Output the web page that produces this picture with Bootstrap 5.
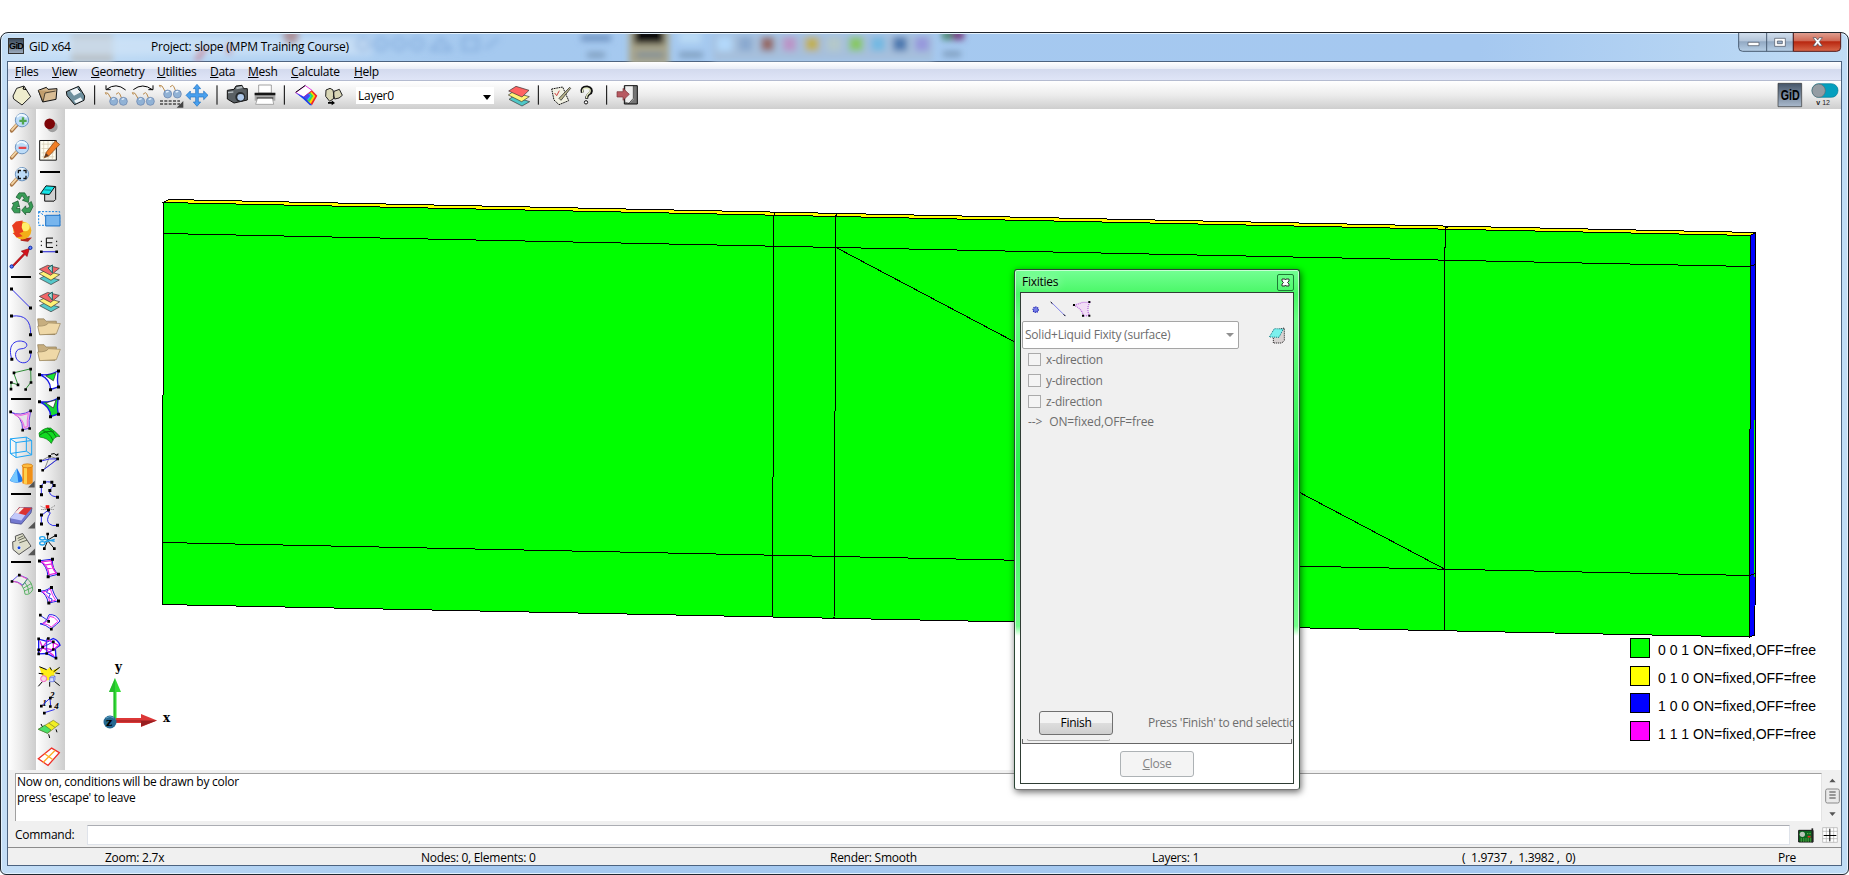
<!DOCTYPE html>
<html lang="en">
<head>
<meta charset="utf-8">
<title>GiD x64 - Project: slope</title>
<link rel="stylesheet" href="https://cdn.jsdelivr.net/npm/bootstrap@5.3.0/dist/css/bootstrap.min.css">
<style>
body{font-family:"Open Sans","Noto Sans",sans-serif;font-size:12px;line-height:16px;letter-spacing:-.27px;color:#000;background:#fff;height:875px;overflow:hidden}
svg{display:block;flex:none}
.k{stroke:#000;fill:none;stroke-width:3}
.bl{stroke:#3030e8;fill:none;stroke-width:3}
.dots{fill:#000}
.win{height:843px;margin-top:32px;border:1px solid #20262e;border-radius:8px 8px 6px 6px;background:linear-gradient(90deg,#c4def6,#a5c9ef 25%,#a5c8f0 80%,#c0dcf5);padding:0 6px 7px;overflow:hidden;box-shadow:inset 0 0 0 1px #e4f2fd}
.titlebar{height:28px;position:relative}
.haze{position:absolute;left:-6px;top:1px}
.ttl{position:relative;display:grid;grid-template-columns:21px 122px 1fr;padding-left:1px;padding-top:5px}
.ttl span{position:relative;top:1px}
.ttl span:last-child{letter-spacing:-.22px}
.gidmark{width:16px;height:16px;background:linear-gradient(#39485a,#9aa9bb);border:1px solid #333;font:bold 9px/14px "Liberation Sans",sans-serif;letter-spacing:-.6px;text-align:center}
.caps{position:absolute;right:0;top:0}
.client{border:1px solid #4c6380;height:805px;background:#f0f0f0;overflow:hidden}
.menus{height:19px;display:grid;grid-template-columns:37px 39px 66px 53px 38px 43px 63px auto;padding:2px 0 0 7px;background:linear-gradient(#fff,#e9edf7 38%,#d3daee 40%,#dfe5f7);border-bottom:1px solid #b4bbd0}
.menus span,.statusline span{white-space:nowrap}
.tools{height:28px;display:grid;grid-template-columns:25px 28px 26px 12px 28px 27px 27px 27px 12px 28px 28px 12px 30px 34px 149px 30px 12px 31px 24px 12px 28px 1fr 33px 33px;padding-left:4px;background:linear-gradient(#fff,#ececec 50%,#cecece)}
.tools > svg{width:100%;height:28px}
.layerbox{height:17px;width:138px;margin-top:6px;background:#fff;line-height:16px;padding:0 3px 0 2px}
.layerbox svg{position:relative;top:2px}
.work{height:661px}
.side1,.side2{background:linear-gradient(90deg,#fff,#ebebeb 45%,#cdcdcd)}
.side1{width:28px}
.side2{width:29px;padding-top:1.5px}
.side1 svg{width:28px;height:27px}
.side2 svg{width:29px;height:26.86px}
.side1 hr,.side2 hr{height:2px;width:20px;background:#000;border:0;opacity:1}
.side1 hr{margin:5px 0 7px 3px}
.side2 hr{margin:7px 0 6px 4px}
.msgs{height:53px;padding:3px 0 0 7px}
.msgtext{width:1807px;height:48px;background:#fff;border-top:1px solid #a0a0a0;border-left:1px solid #a0a0a0;border-right:1px solid #e3e3e3;padding-left:1px;white-space:pre}
.scr{margin-left:3px}
.cmd{height:24px;padding-left:7px}
.cmdfield{width:1703px;height:20px;background:#fff;border:1px solid #dfe3ea;border-top-color:#abadb3}
.cmdlabel{width:72px}
.gridbtn{margin-left:7px}
.statusline{display:grid;grid-template-columns:316px 409px 322px 310px 316px auto;padding:2px 0 0 97px;border-top:1px solid #8c8c8c;height:20px;background:#f0f0f0}
.dlg{position:absolute;left:1014px;top:269px;width:286px;height:521px;border:1px solid #2b4634;border-bottom-color:#777;border-radius:3px;padding:22px 5px 5px;background:linear-gradient(#74ff94,#48f765 24px,#66ff83 50px,#3cf55c 150px,#23f548 200px,#73ff8b 356px,#fff 366px);box-shadow:inset 0 0 0 1px rgba(255,255,255,.6),1px 2px 7px rgba(0,0,0,.6)}
.dlg .cap{position:absolute;left:6px;top:3px;padding:1px;text-shadow:0 0 8px #fff}
.dlgclose{position:absolute;right:5px;top:4px;width:17px;height:17px;border:1px solid #1d7a35;border-radius:2px}
.dlgbody{border:1px solid #2f3d34;height:492px;background:#fff;color:#6d6d6d}
.pane{height:451px;background:#f0f0f0;padding:7px 0 0 1px;overflow:hidden}
.fixsel{width:217px;height:28px;margin-top:1px;border:1px solid #a5a5a5;border-radius:2px;background:#fff;padding:0 4px 0 2px;letter-spacing:-.22px}
.erase{margin-left:29px}
.chk{height:21px;gap:5px;padding-left:6px}
.chk i{width:13px;height:13px;border:1px solid #aaa;background:#f4f4f4}
.onoff{gap:7px;margin-top:-1px}
.onoff span{letter-spacing:-.12px}
.wbtn{width:74px;height:24px;border:1px solid #707070;border-radius:3px;text-align:center;line-height:21px;color:#000;background:linear-gradient(#f3f3f3 48%,#dddddd 52%,#cfcfcf)}
.wbtn.off{border-color:#adb2b5;background:#f4f4f4;color:#838383;height:26px;line-height:24px;margin-top:7px}
.finrow{margin:279px 0 0 17px}
.hint{margin-left:35px;white-space:nowrap}
.stub{height:2px;width:83px;border:1px solid #aaa;border-top:0;border-radius:0 0 3px 3px;margin:4px 0 0 5px}
.tray{height:5px;width:270px;border:1px solid #666;border-top:0;margin-top:-2px}
</style>
</head>
<body>
<main class="win position-relative">
 <header class="titlebar">
  <svg class="haze" width="1845" height="28" viewBox="0 0 1845 28"><defs><filter id="soft" x="-20%" y="-50%" width="140%" height="200%"><feGaussianBlur stdDeviation="3"/></filter></defs>
   <g filter="url(#soft)"><rect x="70" width="42" height="28" fill="#b8bfc5"/><rect x="10" y="3" width="360" height="18" fill="#d3e5f7" opacity=".65"/><circle cx="290" cy="2" r="8" fill="#ab929b"/><path d="M195 26l10-13M228 20v-10" stroke="#c76f83" stroke-width="4"/>
   <g fill="none" stroke="#7da6d8" stroke-width="2"><circle cx="362" cy="10" r="6"/><circle cx="380" cy="10" r="6"/><circle cx="398" cy="10" r="6"/><circle cx="416" cy="10" r="6"/><path d="M430 16l10-12 10 12zM462 4h15v12h-15zM484 15l14-11"/></g>
   <path d="M580 4h30" stroke="#6d91bf" stroke-width="6"/><rect x="628" y="-5" width="40" height="36" fill="#a9a58b"/><rect x="633" y="-6" width="30" height="16" fill="#080b0e"/><path d="M635 21h28M678 21h24M586 21h18M942 20h18" stroke="#67829f" stroke-width="5" opacity=".7"/><rect x="678" y="-3" width="22" height="12" fill="#b9daf5"/><rect x="712" y="0" width="220" height="27" fill="#a6bfdc"/>
   <g><rect x="716" y="3" width="15" height="14" fill="#b2d8fa"/><rect x="738" y="3" width="13" height="14" fill="#8aa9cf"/><rect x="760" y="3" width="13" height="14" fill="#956b66"/><rect x="782" y="3" width="13" height="14" fill="#ba94c7"/><rect x="804" y="3" width="14" height="14" fill="#c0b158"/><rect x="826" y="3" width="14" height="14" fill="#b4c8ca"/><rect x="848" y="3" width="14" height="14" fill="#88c765"/><rect x="870" y="3" width="14" height="14" fill="#75b9e2"/><rect x="892" y="3" width="14" height="14" fill="#4e79b0"/><rect x="914" y="3" width="14" height="14" fill="#9799dc"/><rect x="941" y="-4" width="10" height="10" fill="#4f8c77"/><rect x="951" y="-4" width="12" height="10" fill="#743f82"/></g></g></svg>
  <div class="ttl"><div class="gidmark">GiD</div><span>GiD x64</span><span>Project: slope (MPM Training Course)</span></div>
  <svg class="caps" width="104" height="20" viewBox="0 0 312 60"><defs><linearGradient id="cb" x2="0" y2="1"><stop stop-color="#d7e4f1"/><stop offset=".48" stop-color="#b4c5d9"/><stop offset=".52" stop-color="#92a9c3"/><stop offset="1" stop-color="#b7cfe6"/></linearGradient><linearGradient id="cr" x2="0" y2="1"><stop stop-color="#e3a99c"/><stop offset=".48" stop-color="#cf6955"/><stop offset=".52" stop-color="#b8260f"/><stop offset="1" stop-color="#d8684a"/></linearGradient></defs><path d="M2-5v48q0 12 12 12h152V-5z" fill="url(#cb)" stroke="#4a5d73" stroke-width="3"/><path d="M86 0v55" stroke="#4a5d73" stroke-width="3"/><path d="M166-5v60h130q12 0 12-12V-5z" fill="url(#cr)" stroke="#541a1a" stroke-width="3"/><g stroke="#444b5b" stroke-width="2" fill="#fff"><path d="M30 28h33v10H30zM110 16h32v24h-32z"/><path fill="#9bb1cb" d="M118 24h15v8h-15z"/><path d="M225 14h9l5 7 5-7h9l-9 12 9 13h-9l-5-7-5 7h-9l9-13z"/></g></svg>
 </header>
 <section class="client">
  <nav class="menus"><span><u>F</u>iles</span><span><u>V</u>iew</span><span><u>G</u>eometry</span><span><u>U</u>tilities</span><span><u>D</u>ata</span><span><u>M</u>esh</span><span><u>C</u>alculate</span><span><u>H</u>elp</span></nav>
  <div class="tools">
   <svg viewBox="36 168 75 84"><path d="M50 190l22-7 20 32-26 25-25-18-2-9z" fill="#efedce" stroke="#222" stroke-width="3"/><path d="M72 184l-3 8 10 2" class="k" stroke-width="2"/></svg>
   <svg viewBox="111 168 84 84"><path d="M115 196l24-9 5 6 27-2-3 32-40 8z" fill="#d9bd95" stroke="#111" stroke-width="3"/><path d="M115 196l14 35 6-27 32-6" fill="#c29e6d" stroke="#111" stroke-width="2"/></svg>
   <svg viewBox="195 168 78 84"><path d="M199 200l37-16 18 29-2 13-28 13-23-27z" fill="#6e909e" stroke="#111" stroke-width="3"/><path d="M210 197l22-9 10 14-20 10zM222 227l20-10 6 9-20 9z" fill="#eff5f8"/><path d="M234 191l7 8" class="k"/></svg>
   <svg viewBox="273 168 36 84"><path d="M284 181v58" class="k"/></svg>
   <svg viewBox="309 168 84 84"><g id="gl"><path d="M319 209l-3-6 8 2 10 17m14-14l7-5 4 3 6 14" fill="none" stroke="#b98a4c" stroke-width="3"/><circle cx="341" cy="229" r="12" fill="#91b2d5" stroke="#637fab" stroke-width="2"/><circle cx="370" cy="229" r="12" fill="#91b2d5" stroke="#637fab" stroke-width="2"/><path d="M336 223l8-2M365 223l8-2" stroke="#e8f3ff" stroke-width="4"/></g><path d="M320 193q28-22 57 2M318 181v13h14" class="k"/></svg>
   <svg viewBox="393 168 81 84"><use href="#gl" x="81"/><path d="M400 194q28-22 57 0M459 181v13h-14" class="k"/></svg>
   <svg viewBox="474 168 81 84"><use href="#gl" x="162" y="-22"/><path d="M480 228h60M480 237h60" stroke="#000" stroke-width="3" stroke-dasharray="9 4"/><path d="M550 228v20h-20z" fill="#444"/></svg>
   <svg viewBox="555 168 81 84"><path d="M591 178l11 13h-7v15h16v-8l13 13-13 13v-8h-16v15h7l-11 13-11-13h7v-15h-16v8l-13-13 13-13v8h16v-15h-7z" fill="#48a0ee" stroke="#1d6fc1" stroke-width="2"/></svg>
   <svg viewBox="636 168 36 84"><path d="M651 181v58" class="k"/></svg>
   <svg viewBox="672 168 84 84"><path d="M682 196l20-3 6-10 18-2 5 10h11v34l-40 9-20-12z" fill="#5a6064" stroke="#111" stroke-width="3"/><path d="M709 190l18-4" stroke="#b6bdc0" stroke-width="6"/><path d="M684 203l16-2" stroke="#b6bdc0" stroke-width="4"/><circle cx="721" cy="216" r="15" fill="#272b2e"/><circle cx="722" cy="217" r="10" fill="#afc9ea"/></svg>
   <svg viewBox="756 168 84 84"><path d="M776 180h38v24h-38z" fill="#fff" stroke="#777" stroke-width="2"/><path d="M764 204h62v23h-62z" fill="#aaa"/><path d="M764 207h62" stroke="#161616" stroke-width="7"/><path d="M773 218h44l4 20h-54z" fill="#fff" stroke="#888" stroke-width="2"/><path d="M770 219h50" stroke="#222" stroke-width="3"/></svg>
   <svg viewBox="840 168 36 84"><path d="M853 181v58" class="k"/></svg>
   <svg viewBox="876 168 90 84"><path d="M887 203l29-21 20 14-25 20z" fill="#fff" stroke="#e43be4" stroke-width="3"/><path d="M887 202l29-21" class="k"/><path d="M936 196l16 16-16 29-25-25z" fill="#ef2328"/><path d="M933 199l13 14-14 24-8-8z" fill="#ffd400"/><path d="M930 202l10 11-12 18-6-6z" fill="#2fe05a"/><path d="M926 205l8 8-10 13-6-6z" fill="#19c9f5"/><path d="M911 215l13-9 7 6-11 13z" fill="#4747f5"/><path d="M887 203l25 13 24 25-6 0-20-19z" fill="#1442f0"/></svg>
   <svg viewBox="966 168 102 84"><path d="M978 195l12-5 9 5 4 24-14 10-12-15zM1002 199l16-6 9 18-10 8-13 3-4-6z" fill="#d8d6b5" stroke="#222" stroke-width="3"/><path d="M984 231h11v-5l10 8-10 7v-5h-11z" fill="#000"/></svg>
   <div><div class="layerbox d-flex justify-content-between align-items-center">Layer0<svg width="8" height="5" viewBox="0 0 8 5"><path d="M0 0h8L4 5z"/></svg></div></div>
   <svg viewBox="15 168 90 84"><g stroke="#333" stroke-width="2"><path d="M27 223l13-9 49 16-23 13z" fill="#4fc7c7"/><path d="M25 210l13-9 50 14-23 15z" fill="#fff276"/><path d="M26 198l22-14 39 12-21 20z" fill="#ff6262"/></g></svg>
   <svg viewBox="105 168 36 84"><path d="M115 181v58" class="k"/></svg>
   <svg viewBox="141 168 93 84"><path d="M155 192l33-6 18 41-29 12-15-14z" fill="#f2f2e4" stroke="#111" stroke-width="3" stroke-dasharray="5 2"/><path d="M164 204l6 8 8-15" fill="none" stroke="#cf4040" stroke-width="3"/><path d="M177 220l32-33 3 3-29 36z" fill="#b9b68d" stroke="#111" stroke-width="2"/></svg>
   <svg viewBox="234 168 72 84"><path d="M247 203q-5-17 14-17 18 3 11 18-12 6-12 17" fill="none" stroke="#111" stroke-width="9"/><path d="M248 202q-3-13 13-13 14 3 8 14-10 6-9 16" fill="none" stroke="#e6edc6" stroke-width="4"/><circle cx="258" cy="232" r="5" fill="#fff" stroke="#111" stroke-width="3"/></svg>
   <svg viewBox="306 168 36 84"><path d="M320 181v58" class="k"/></svg>
   <svg viewBox="342 168 84 84"><path d="M373 182h39v55h-39z" fill="#757575" stroke="#111" stroke-width="3"/><path d="M376 184h25v38l-12 12-13-4z" fill="#eee"/><path d="M400 182v38l-15 17" stroke="#111" stroke-width="2" fill="none"/><path d="M351 200h18v-10l19 18-19 18v-10h-18z" fill="#b75961" stroke="#793036" stroke-width="2"/></svg>
   <span></span>
   <svg viewBox="825 168 99 84"><defs><linearGradient id="gg" x2="0" y2="1"><stop stop-color="#46566a"/><stop offset="1" stop-color="#a9b9cc"/></linearGradient></defs><path d="M834 175h71v70h-71z" fill="url(#gg)" stroke="#333" stroke-width="2"/><text x="842" y="226" font-family="Liberation Sans,sans-serif" font-weight="bold" font-size="42" textLength="57" lengthAdjust="spacingAndGlyphs" letter-spacing="0">GiD</text></svg>
   <svg viewBox="924 168 99 84"><rect x="936" y="176" width="78" height="41" rx="20" fill="#049fbe" stroke="#087e95" stroke-width="2"/><circle cx="956" cy="197" r="20" fill="#949ca3" stroke="#626a70" stroke-width="2"/><text x="949" y="241" font-family="Liberation Sans,sans-serif" font-size="21" letter-spacing="0" fill="#222"><tspan font-weight="bold">v</tspan> 12</text></svg>
  </div>
  <div class="work d-flex">
   <div class="side1">
    <svg viewBox="24 10.5 84 81"><g id="mag"><path d="M51 58L35 76" stroke="#a97646" stroke-width="11" stroke-linecap="round"/><path d="M51 56L36 73" stroke="#f2d3a2" stroke-width="6" stroke-linecap="round"/><circle cx="66" cy="44" r="20" fill="#bddcf8" stroke="#6d94bf" stroke-width="3"/><path d="M51 35q12-15 29 0" stroke="#eff9ff" stroke-width="6" fill="none"/></g><path d="M58 46h22M69 35v22" stroke="#50a650" stroke-width="7"/></svg>
    <svg viewBox="24 91.5 84 81"><use href="#mag" y="81"/><path d="M56 127h23" stroke="#e34449" stroke-width="7"/></svg>
    <svg viewBox="24 172.5 84 81"><use href="#mag" y="162"/><path d="M55 203v-8h8m7 0h8v8m0 8v8h-8m-7 0h-8v-8" stroke="#111" stroke-width="4" fill="none"/></svg>
    <svg viewBox="24 253.5 84 81"><g fill="#399c57" stroke="#145129" stroke-width="2"><path d="M48 275l9-13h17l8 13 6-3-3 19-18-7 6-4-7-10-7 12z"/><path d="M85 294l9-6 5 15-9 18H77v7l-12-14 12-13v7h8l4-6z"/><path d="M60 322H43l-8-12 6-13-5-3 18-8 5 19-6-3-3 7h10z"/></g></svg>
    <svg viewBox="24 334.500 84 81"><path d="M62 398l34-2-12 13-22-3z" fill="#b4261c"/><circle cx="67" cy="375" r="27" fill="#f3ae18"/><circle cx="76" cy="364" r="13" fill="#fff06b"/><path d="M36 360l12-12 20-3-3 20 5 14-12 4 10 9-18 4-7-9-5-4 6-2z" fill="#e83c20"/></svg>
    <svg viewBox="24 415.5 84 81"><path d="M36 481l36-38-8-6 24-8-7 24-6-6-35 37z" fill="#d5131b" stroke="#90050a" stroke-width="2"/><circle cx="35" cy="483" r="5" fill="#5f83ff" stroke="#0924a9" stroke-width="3"/><circle cx="91" cy="427" r="5" fill="#5f83ff" stroke="#0924a9" stroke-width="3"/></svg>
    <hr>
    <svg viewBox="24 538.5 84 81"><path d="M35 551l56 56" class="bl"/><path class="dots" d="M30 546h9v9h-9zM87 603h9v9h-9z"/></svg>
    <svg viewBox="24 619.5 84 81"><path d="M35 632q59-8 57 55" class="bl"/><path class="dots" d="M30 627h9v9h-9zM87 683h9v9h-9z"/></svg>
    <svg viewBox="24 -4.5 84 81"><path d="M36 58C22 15 42-1 65 2S84 25 63 25s-22 32-2 40S95 55 92 36" class="bl"/><path class="dots" d="M31 52h9v9h-9zM87 30h9v9h-9z"/></svg>
    <svg viewBox="24 76.5 84 81"><path d="M33 146V126l21 7-13-36 51-12 1 40-17 22" fill="none" stroke="#2f8c36" stroke-width="3"/><path class="dots" d="M29 142h8v8h-8zM30 122h8v8h-8zM50 129h8v8h-8zM38 93h8v8h-8zM88 82h8v8h-8zM89 122h8v8h-8zM73 143h8v8h-8z"/></svg>
    <hr>
    <svg viewBox="24 199.5 84 81"><path d="M33 215q27 13 59-4-7 32-4 52l-20 5q0-40-35-53z" fill="#f4b9ee" stroke="#6e45e2" stroke-width="3"/><path d="M43 222q20 7 42-3-5 22-3 39l-9 3q-2-26-30-39z" fill="#e4e3e9" stroke="#f067df" stroke-width="3"/><path class="dots" d="M28 210h8v8h-8zM88 207h8v8h-8zM85 260h8v8h-8zM64 265h8v8h-8z"/></svg>
    <svg viewBox="24 280.5 84 81"><path d="M31 295l48-5 16 10v43l-47 8-17-12zM31 295l17 11 47-6M48 306v45M79 290v42l16 11M79 332l-48 7" fill="none" stroke="#1ba4f5" stroke-width="3"/></svg>
    <svg viewBox="24 361.5 84 81"><path d="M51 383l20 38q-20 12-42 0z" fill="#227bea"/><path d="M50 384l5 42q-16 1-25-6z" fill="#74c7ff"/><path d="M67 376h31v52q-16 8-31 0z" fill="#f19018"/><path d="M72 376h9v54h-9z" fill="#ffd04c"/><ellipse cx="82" cy="376" rx="16" ry="6" fill="#ffba3d" stroke="#c76f0a" stroke-width="2"/><path d="M104 421v20H84z" fill="#555"/></svg>
    <hr>
    <svg viewBox="24 484.5 84 81"><path d="M31 534l27-33 38 1-3 15-29 34-32-4z" fill="#7379d0" stroke="#35377c" stroke-width="2"/><path d="M31 533l17-21 29 10-13 18z" fill="#c3c9fa"/><path d="M57 501l39 1-19 22-31-8z" fill="#dc3332"/><path d="M60 501l12 1-17 17-10-3z" fill="#f8ece9"/><path d="M105 544v20H84z" fill="#555"/></svg>
    <svg viewBox="24 565.5 84 81"><path d="M46 587l22-8 25 38-36 25-18-15-1-23 9-3z" fill="#ddddca" stroke="#555" stroke-width="3"/><path d="M53 594l17-8M55 600l20-9M58 607l23-8" stroke="#66695a" stroke-width="3"/><circle cx="57" cy="622" r="6" fill="#1344de" stroke="#eee" stroke-width="3"/><path d="M105 624v20H84z" fill="#555"/></svg>
    <hr>
    <svg viewBox="24 -1.5 84 81"><path d="M35 32l22-19 26 11-14 20q-14-12-34-12z" fill="#eee" stroke="#6658ed" stroke-width="3"/><path d="M36 33q19-1 31 15M58 14l25 12" stroke="#e84bbd" stroke-width="3" fill="none"/><path d="M66 46q9 13 9 25 14 4 23-13-1-22-16-33zM74 35q12 12 13 34M70 53l24-14M73 62l25-12" fill="none" stroke="#44aa51" stroke-width="2.500"/><path class="dots" d="M32 29h8v8h-8zM54 10h8v8h-8z"/></svg>
   </div>
   <div class="side2">
    <svg viewBox="108 16.5 87 80.6"><circle cx="157" cy="64" r="16" fill="#9f9f9f"/><circle cx="149" cy="55" r="16" fill="#7d0508"/></svg>
    <svg viewBox="108 97.5 87 80.6"><path d="M119 108h50v59h-50z" fill="#fffdf0" stroke="#151515" stroke-width="3"/><path d="M125 119h38M125 132h38M125 145h38M125 157h38M131 110v54M144 110v54M157 110v54" stroke="#d2c8ae" stroke-width="2"/><path d="M166 109l13 11-32 34-14 6 6-17z" fill="#f07e25" stroke="#783a0a" stroke-width="2"/><path d="M133 159l5-13 8 7z" fill="#5a3a24"/></svg>
    <hr>
    <svg viewBox="108 223.5 87 80.6"><path d="M134 254l33-8v39l-5 5h-28z" fill="#d0d0d0" stroke="#111" stroke-width="3"/><path d="M121 268l17-24 27 2-17 24z" fill="#16e5e8" stroke="#111" stroke-width="3"/><path d="M133 256l20 1" stroke="#087f88" stroke-width="3"/></svg>
    <svg viewBox="108 304.1 87 80.6"><path d="M116 321h63v42M116 321v41M116 321l20 14M116 362h18" fill="none" stroke="#1382e2" stroke-width="3" stroke-dasharray="6 4"/><path d="M137 332h43v32h-43z" fill="#77b5ed" stroke="#1d72c7" stroke-width="3"/></svg>
    <svg viewBox="108 384.7 87 80.6"><path d="M159 400h-20v28h20M139 414h18" class="k"/><path d="M125 441h46" stroke="#1616d5" stroke-width="3"/><path d="M124 408v4m0 8v4m46-16v4m0 8v4" class="k"/><path class="dots" d="M120 437h8v8h-8zM166 437h8v8h-8z"/></svg>
    <svg viewBox="108 465.2 87 80.6"><g id="ly" stroke="#333" stroke-width="2"><path d="M119 521l15-8 44 12-25 14z" fill="#56c8ca"/><path d="M117 506l19-9 43 12-26 17z" fill="#fff176"/><path d="M118 493l25-12 35 9-26 21z" fill="#f06668"/><path d="M144 489l13-9v24z" fill="#a5ded9" stroke="#145f61" stroke-width="3"/></g></svg>
    <svg viewBox="108 545.8 87 80.6"><use href="#ly" y="81"/></svg>
    <svg viewBox="108 626.4 87 80.6"><g id="fo"><path d="M113 641h19l6 7h31v10l-4 30h-46z" fill="#c7ae7f" stroke="#8a7550" stroke-width="2"/><path d="M113 663q28 0 32-10l36 2-12 31-50 3z" fill="#efd8a7" stroke="#96825b" stroke-width="2"/></g></svg>
    <svg viewBox="108 2 87 80.6"><use href="#fo" y="-625"/></svg>
    <svg viewBox="108 82.6 87 80.6"><path d="M118 105q30 5 57-11-5 28 0 48l-23 8q0-30-34-45z" fill="#fff" stroke="#1717e6" stroke-width="4"/><path d="M137 109l31-9-8 24z" fill="#17e637" stroke="#222" stroke-width="2"/><path class="dots" d="M114 101h9v9h-9zM171 90h9v9h-9zM171 138h9v9h-9zM147 146h9v9h-9z"/></svg>
    <svg viewBox="108 163.1 87 80.6"><path d="M118 186q30 5 57-11-5 28 0 48l-23 8q0-30-34-45z" fill="#15d834" stroke="#1717e6" stroke-width="4"/><path d="M137 190l31-9-8 24z" fill="#fff" stroke="#222" stroke-width="2"/><path class="dots" d="M114 182h9v9h-9zM171 171h9v9h-9zM171 219h9v9h-9zM147 227h9v9h-9z"/></svg>
    <svg viewBox="108 243.7 87 80.6"><path d="M117 280q16-18 35-15 14 10 28 25-17-3-26 21-12-17-35-19z" fill="#12da22" stroke="#066e0e" stroke-width="2"/><path d="M127 272q20 4 32 30M142 265q18 7 26 26M118 287q20-17 44-10" fill="none" stroke="#087311" stroke-width="3"/></svg>
    <svg viewBox="108 324.3 87 80.6"><path d="M122 363l27-14 24 8-45 34M149 349l-15 38" fill="none" stroke="#888" stroke-width="3"/><path d="M121 364q28-10 53-7l-45 34" class="bl"/><path d="M153 343q10-6 18 4" class="k"/><path class="dots" d="M118 359h8v8h-8zM145 345h8v8h-8zM169 353h8v8h-8zM166 347h9v-8zM124 387h8v8h-8z"/></svg>
    <svg viewBox="108 404.9 87 80.6"><path d="M124 464V439q5-17 28-13 15 9-1 21-10 20 20 24" class="bl"/><path class="dots" d="M120 460h9v9h-9zM119 435h9v9h-9zM129 422h9v9h-9zM151 422h9v9h-9zM158 432h9v9h-9zM145 447h9v9h-9zM168 467h9v9h-9z"/></svg>
    <svg viewBox="108 485.5 87 80.6"><path d="M124 551v-25l22-17q-4 9 5 9-15 22-3 33 9 8 24 5" class="bl"/><path d="M122 498l22 10M165 496l-20 13M124 508h38" stroke="#777" stroke-width="3" stroke-dasharray="3 3"/><path d="M137 495h11v10h-11z" fill="#f01414"/><path class="dots" d="M120 547h9v9h-9zM120 520h9v9h-9zM141 505h9v9h-9zM168 551h9v9h-9z"/></svg>
    <svg viewBox="108 566 87 80.6"><path d="M140 604l27-16M143 602V586M143 604l20 24M143 604l-10 24" stroke="#111" stroke-width="3" fill="none"/><g stroke="#22a3ed" stroke-width="4" fill="none"><path d="M134 600l30 6M134 608l30-8"/><ellipse cx="127" cy="597" rx="8" ry="5"/><ellipse cx="127" cy="612" rx="8" ry="5"/></g><path class="dots" d="M139 580h8v8h-8zM163 585h8v8h-8zM129 624h8v8h-8zM159 624h8v8h-8z"/></svg>
    <svg viewBox="108 646.6 87 80.6"><path d="M118 664l39-5q-1 31 18 45l-31 8q-2-33-26-48z" fill="#fff" stroke="#1818df" stroke-width="3"/><path d="M124 667l30-4q1 25 15 38l-22 5q-3-26-23-39zM133 677l24-4M140 689l22-5" fill="none" stroke="#e523df" stroke-width="4"/><path class="dots" d="M114 660h9v9h-9zM153 655h9v9h-9zM171 700h9v9h-9zM140 707h9v9h-9z"/></svg>
    <svg viewBox="108 37.2 87 80.6"><path d="M119 63q14 5 35-11 9 27 21 42-13 2-30 7-4-27-26-38z" fill="#fff" stroke="#1c1ce1" stroke-width="3"/><path d="M127 67q15 0 24-9 6 21 16 34l-18 4q-3-20-22-29z" fill="none" stroke="#f02be9" stroke-width="3"/><path d="M143 60l-3 9 11 4-5 11 10 4-1 8" class="bl"/><path class="dots" d="M114 58h9v9h-9zM150 49h9v9h-9zM171 90h9v9h-9zM142 96h9v9h-9z"/></svg>
    <svg viewBox="108 117.8 87 80.6"><path d="M120 162q15 4 27-27 21-3 33 19-8 8-27 24-15-13-33-16z" fill="#fff" stroke="#1d1de1" stroke-width="3"/><path d="M128 161q16-3 21-21 14-1 25 15l-20 17q-9-9-26-11z" fill="none" stroke="#f02be9" stroke-width="3"/><path d="M121 137l25 17" class="bl"/><path class="dots" d="M117 132h8v8h-8zM142 151h8v8h-8zM150 174h8v8h-8z"/></svg>
    <svg viewBox="108 198.4 87 80.6"><path d="M116 208l27 7 17-9q14 4 20 20l-14 10 2 29-28-14-24 1z" fill="#fff" stroke="#1717ef" stroke-width="4"/><path d="M120 246l8-14 17-22 15 8 15 8-15 14-32-6-8-20M128 232l34 26M160 218v22l-20 10" fill="none" stroke="#e323e0" stroke-width="4"/><path d="M128 232l32-16M128 232l-12 8M160 240l-20 10V206" class="bl"/><path class="dots" d="M112 203h8v8h-8zM141 202h8v8h-8zM156 212h8v8h-8zM124 228h8v8h-8zM112 236h8v8h-8zM112 248h8v8h-8zM156 235h8v8h-8zM136 247h8v8h-8zM164 261h8v8h-8z"/></svg>
    <svg viewBox="108 279 87 80.6"><path d="M118 290l22 10 10-8 5 9 24-8-17 18 3 10-16 9-16 2-7-16z" fill="#ffee15"/><path d="M118 290l22 9M150 292l5 9M179 292l-18 13M180 311l-14-2M130 312l-14-2M128 334l-13 15M149 336v14M163 334l16 13" class="k"/><circle cx="131" cy="326" r="9" fill="#f4d2e5" stroke="#ef61c1" stroke-width="3"/><path d="M149 323h12v12h-12zM149 323l5-5h11v12l-4 5m0-12l4-5" fill="#d6dcff" stroke="#5367dc" stroke-width="2"/></svg>
    <svg viewBox="108 359.5 87 80.6"><g font-family="Liberation Serif,serif" font-style="italic" font-weight="bold" font-size="27" letter-spacing="0"><text x="127" y="409">1</text><text x="150" y="385">2</text><text x="163" y="417">4</text></g><path d="M124 408l26-24 2 24M132 428l32-10" class="bl"/><path class="dots" d="M120 404h8v8h-8zM147 380h8v8h-8zM147 405h8v8h-8zM129 425h8v8h-8z"/></svg>
    <svg viewBox="108 440.1 87 80.6"><path d="M115 480l45-27 18 12-35 27z" fill="#f2ee23" stroke="#77772c" stroke-width="2"/><path d="M115 480l19-12 19 14-11 10z" fill="#4ce067" stroke="#3d7a3a" stroke-width="2"/><path d="M146 461l20 14" stroke="#77772c" stroke-width="2"/><path d="M123 464l4 8M168 480l3 9M146 495l3 11" class="k"/></svg>
    <svg viewBox="108 520.7 87 80.6"><path d="M115 568l40-32 23 14-34 38z" fill="#fff" stroke="#ef2f28" stroke-width="4"/><path d="M129 579l36-36M134 553l24 17" stroke="#ffad27" stroke-width="4"/></svg>
   </div>
   <svg width="1776" height="661" viewBox="65 109 1776 661" style="background:#fff">
    <g shape-rendering="crispEdges" fill="#0f0" stroke="#000">
     <path d="M163.5 202.5L169 199.5 1755.5 232.5 1750.5 235.5z" fill="#ff0"/>
     <path d="M163.5 202.5L1750.5 235.5 1749.5 637 162.5 604.5z"/>
     <path d="M1750.5 235.5l5-3V577l-1 58-5 2z" fill="#00f"/>
     <path d="M1754.5 420v157" stroke="#0f0"/><path d="M1755.5 232v345" />
     <path d="M163.5 233.5L1750 266.5l5.500-2M162.500 542.500L1749.500 575.500l6-2M775 212.500l-1 3-1.500 401M837 213.500l-1.500 3-1 400-1 2M1448 227l-2.500 1-1 40v362M836 247.500L1444.500 569" fill="none"/>
    </g>
    <path d="M113.500 719V692h-4.500l6-14 6 14h-4.500v27z" fill="#31dc33"/><path d="M109 692l6-14 0 14v27h-1.500V692z" fill="#1ca427" opacity=".55"/><path d="M116 718h25v-4l16 6.500-16 6.500v-4h-25z" fill="#dc3737"/><path d="M116 721.500h25v5l16-6h-41z" fill="#981f21"/>
    <circle cx="110" cy="722" r="6.500" fill="#266890"/><path d="M106 718q4-3 8 0" stroke="#5ca0c3" fill="none"/>
    <g font-family="DejaVu Serif,serif" font-weight="bold" font-size="12" letter-spacing="0"><text x="115" y="671">y</text><text x="163" y="722">x</text><text x="106" y="726" font-size="11">z</text></g>
    <g stroke="#000" shape-rendering="crispEdges"><path d="M1630.500 638.500h19v19h-19z" fill="#0f0"/><path d="M1630.500 666.500h19v19h-19z" fill="#ff0"/><path d="M1630.500 693.500h19v19h-19z" fill="#00f"/><path d="M1630.500 721.500h19v19h-19z" fill="#f0f"/></g>
    <g font-family="Liberation Sans,Arial,sans-serif" font-size="14" letter-spacing="0"><text x="1658" y="655" textLength="158">0 0 1 ON=fixed,OFF=free</text><text x="1658" y="683" textLength="158">0 1 0 ON=fixed,OFF=free</text><text x="1658" y="711" textLength="158">1 0 0 ON=fixed,OFF=free</text><text x="1658" y="739" textLength="158">1 1 1 ON=fixed,OFF=free</text></g>
   </svg>
  </div>
  <div class="msgs d-flex"><div class="msgtext">Now on, conditions will be drawn by color
press 'escape' to leave</div><svg class="scr" width="15" height="48" viewBox="0 0 45 144"><path d="M13 28h19L22 17zM13 118h19L22 129z" fill="#555"/><rect x="2" y="48" width="41" height="42" rx="5" fill="#e9e9e9" stroke="#898989" stroke-width="3"/><path d="M13 57h19M13 66h19M13 75h19" stroke="#444" stroke-width="3"/></svg></div>
  <div class="cmd d-flex align-items-center"><span class="cmdlabel">Command:</span><div class="cmdfield"></div>
   <svg class="ms-2" width="17" height="17" viewBox="0 0 51 51"><path d="M2 10h43v35H2z" fill="#0b651d" stroke="#111" stroke-width="3"/><path d="M43 4v42" stroke="#222" stroke-width="5"/><circle cx="13" cy="22" r="8" fill="#b9c5b8"/><path d="M27 20h12M8 36h33M8 42h33" stroke="#68bc4b" stroke-width="3" stroke-dasharray="4 3"/><path d="M29 29h9" stroke="#db3020" stroke-width="5"/></svg>
   <svg class="gridbtn" width="16" height="16" viewBox="0 0 48 48"><path d="M2 2h44v44H2zM13 2v44M35 2v44M2 13h44M2 35h44" fill="#fff" stroke="#aaa" stroke-width="2"/><path d="M23.500 5v38M5 25.500h38" class="k"/></svg></div>
  <footer class="statusline"><span>Zoom: 2.7x</span><span>Nodes: 0, Elements: 0</span><span>Render: Smooth</span><span>Layers: 1</span><span>(&nbsp; 1.9737 ,&nbsp; 1.3982 ,&nbsp; 0)</span><span>Pre</span></footer>
 </section>
</main>
<aside class="dlg">
 <div class="cap">Fixities</div>
 <div class="dlgclose"><svg width="15" height="15" viewBox="0 0 15 15"><path d="M4 4h3l.5 1 .5-1h3v2l-1.500 1.500L11 9v2H8l-.5-1-.5 1H4V9l1.500-1.500L4 6z" fill="#fff" stroke="#333"/></svg></div>
 <div class="dlgbody">
  <div class="pane">
   <svg width="78" height="20" viewBox="52 118 234 60"><circle cx="93" cy="147" r="8" fill="#747fe4"/><circle cx="93" cy="147" r="8" fill="none" stroke="#1515af" stroke-width="4" stroke-dasharray="3 3"/><path d="M139 124l43 42" stroke="#8181e8" stroke-width="3"/><path d="M138 124l5 5m34 32l5 5" class="k"/><path d="M208 134l26-9h21q-10 20-1 39l-18 2q-3-21-28-32z" fill="#f1ddf5" stroke="#bd6be2" stroke-width="4" stroke-dasharray="3 3"/><path class="dots" d="M205 130h6v6h-6zM251 121h6v6h-6zM251 162h6v6h-6zM232 162h6v6h-6z"/></svg>
   <div class="d-flex align-items-center"><div class="fixsel d-flex justify-content-between align-items-center"><span>Solid+Liquid Fixity (surface)</span><svg width="8" height="4" viewBox="0 0 8 4"><path d="M0 0h8L4 4z" fill="#909090"/></svg></div>
   <svg class="erase" width="18" height="18" viewBox="790 198 54 54"><path d="M806 212l33-8v38l-8 7h-25z" fill="#d7d2d2" stroke="#111" stroke-width="3" stroke-dasharray="3 3"/><path d="M794 231l15-25 27 1-13 25z" fill="#7bf0ed" stroke="#087a80" stroke-width="3" stroke-dasharray="3 3"/></svg></div>
   <div class="chk d-flex align-items-center"><i></i><span>x-direction</span></div><div class="chk d-flex align-items-center"><i></i><span>y-direction</span></div><div class="chk d-flex align-items-center"><i></i><span>z-direction</span></div>
   <div class="chk onoff d-flex align-items-center"><span>--&gt;</span><span>ON=fixed,OFF=free</span></div>
   <div class="finrow d-flex align-items-center"><div class="wbtn flex-shrink-0">Finish</div><span class="hint">Press 'Finish' to end selection</span></div>
   <div class="stub"></div><div class="tray"></div>
  </div>
  <div class="wbtn off mx-auto"><u>C</u>lose</div>
 </div>
</aside>
<script src="https://cdn.jsdelivr.net/npm/bootstrap@5.3.0/dist/js/bootstrap.bundle.min.js"></script>
</body>
</html>
